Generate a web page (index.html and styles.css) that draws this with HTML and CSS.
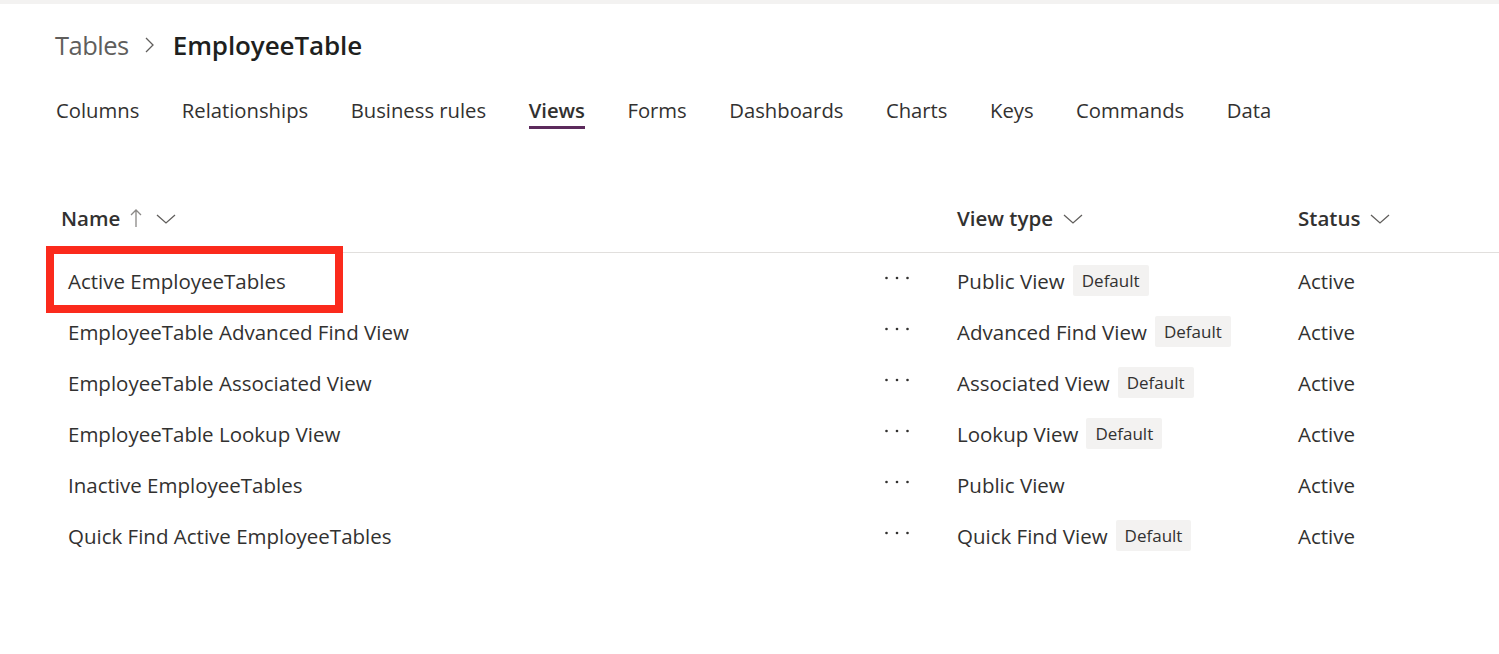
FILE: index.html
```html
<!DOCTYPE html>
<html>
<head>
<meta charset="utf-8">
<link rel="stylesheet" href="styles.css">
</head>
<body>
<div class="topstrip"></div>
<div class="page">
  <div class="breadcrumb">
    <span class="crumb">Tables</span>
    <svg class="crumb-sep" width="12" height="16" viewBox="0 0 12 16"><path d="M2 1 L9 8 L2 15" fill="none" stroke="#605e5c" stroke-width="1.3"/></svg>
    <span class="crumb-current">EmployeeTable</span>
  </div>
  <nav class="tabs">
    <span class="tab">Columns</span>
    <span class="tab">Relationships</span>
    <span class="tab">Business rules</span>
    <span class="tab active">Views</span>
    <span class="tab">Forms</span>
    <span class="tab">Dashboards</span>
    <span class="tab">Charts</span>
    <span class="tab">Keys</span>
    <span class="tab">Commands</span>
    <span class="tab">Data</span>
  </nav>
</div>

<div class="table">
  <div class="row head">
    <div class="c-name h-name">Name
      <svg class="sort" width="12" height="20" viewBox="0 0 12 20"><path d="M6 2 V19 M1 7 L6 2 L11 7" fill="none" stroke="#8a8886" stroke-width="1.3"/></svg>
      <svg class="chev" width="20" height="12" viewBox="0 0 20 12"><path d="M1 2 L10 10 L19 2" fill="none" stroke="#605e5c" stroke-width="1.3"/></svg>
    </div>
    <div class="c-dots"></div>
    <div class="c-type">View type
      <svg class="chev" width="20" height="12" viewBox="0 0 20 12"><path d="M1 2 L10 10 L19 2" fill="none" stroke="#605e5c" stroke-width="1.3"/></svg>
    </div>
    <div class="c-status">Status
      <svg class="chev" width="20" height="12" viewBox="0 0 20 12"><path d="M1 2 L10 10 L19 2" fill="none" stroke="#605e5c" stroke-width="1.3"/></svg>
    </div>
  </div>

  <div class="row first">
    <div class="c-name b-name">Active EmployeeTables<span class="highlight"></span></div>
    <div class="c-dots"><svg width="26" height="6" viewBox="0 0 26 6"><circle cx="2.5" cy="3" r="1.3" fill="#323130"/><circle cx="13" cy="3" r="1.3" fill="#323130"/><circle cx="23.5" cy="3" r="1.3" fill="#323130"/></svg></div>
    <div class="c-type">Public View<span class="badge">Default</span></div>
    <div class="c-status">Active</div>
  </div>
  <div class="row">
    <div class="c-name b-name">EmployeeTable Advanced Find View</div>
    <div class="c-dots"><svg width="26" height="6" viewBox="0 0 26 6"><circle cx="2.5" cy="3" r="1.3" fill="#323130"/><circle cx="13" cy="3" r="1.3" fill="#323130"/><circle cx="23.5" cy="3" r="1.3" fill="#323130"/></svg></div>
    <div class="c-type">Advanced Find View<span class="badge">Default</span></div>
    <div class="c-status">Active</div>
  </div>
  <div class="row">
    <div class="c-name b-name">EmployeeTable Associated View</div>
    <div class="c-dots"><svg width="26" height="6" viewBox="0 0 26 6"><circle cx="2.5" cy="3" r="1.3" fill="#323130"/><circle cx="13" cy="3" r="1.3" fill="#323130"/><circle cx="23.5" cy="3" r="1.3" fill="#323130"/></svg></div>
    <div class="c-type">Associated View<span class="badge">Default</span></div>
    <div class="c-status">Active</div>
  </div>
  <div class="row">
    <div class="c-name b-name">EmployeeTable Lookup View</div>
    <div class="c-dots"><svg width="26" height="6" viewBox="0 0 26 6"><circle cx="2.5" cy="3" r="1.3" fill="#323130"/><circle cx="13" cy="3" r="1.3" fill="#323130"/><circle cx="23.5" cy="3" r="1.3" fill="#323130"/></svg></div>
    <div class="c-type">Lookup View<span class="badge">Default</span></div>
    <div class="c-status">Active</div>
  </div>
  <div class="row">
    <div class="c-name b-name">Inactive EmployeeTables</div>
    <div class="c-dots"><svg width="26" height="6" viewBox="0 0 26 6"><circle cx="2.5" cy="3" r="1.3" fill="#323130"/><circle cx="13" cy="3" r="1.3" fill="#323130"/><circle cx="23.5" cy="3" r="1.3" fill="#323130"/></svg></div>
    <div class="c-type">Public View</div>
    <div class="c-status">Active</div>
  </div>
  <div class="row">
    <div class="c-name b-name">Quick Find Active EmployeeTables</div>
    <div class="c-dots"><svg width="26" height="6" viewBox="0 0 26 6"><circle cx="2.5" cy="3" r="1.3" fill="#323130"/><circle cx="13" cy="3" r="1.3" fill="#323130"/><circle cx="23.5" cy="3" r="1.3" fill="#323130"/></svg></div>
    <div class="c-type">Quick Find View<span class="badge">Default</span></div>
    <div class="c-status">Active</div>
  </div>
</div>
</body>
</html>
```

FILE: styles.css
```css
* { box-sizing: border-box; }
html, body {
  margin: 0;
  padding: 0;
  background: #ffffff;
  font-family: "Open Sans", "Noto Sans", sans-serif;
  color: #323130;
  overflow: hidden;
}
.topstrip {
  height: 4px;
  background: #f3f2f1;
}
.page {
  padding-left: 55px;
}
.breadcrumb {
  display: flex;
  align-items: center;
  height: 40px;
  margin-top: 21px;
}
.crumb {
  font-size: 25.5px;
  color: #605e5c;
  letter-spacing: -0.5px;
}
.crumb-sep {
  margin: 0 17px 0 15px;
}
.crumb-current {
  font-size: 26px;
  font-weight: 600;
  color: #201f1e;
  letter-spacing: -0.1px;
}
.tabs {
  display: flex;
  gap: 42.5px;
  margin-top: 31px;
  padding-left: 1px;
}
.tab {
  font-size: 20.25px;
  line-height: 28px;
  padding-bottom: 2px;
  border-bottom: 3px solid transparent;
  color: #323130;
}
.tab.active {
  font-weight: 600;
  border-bottom-color: #5c2a5c;
}
.table {
  margin-top: 54px;
  margin-left: 46px;
}
.row {
  display: grid;
  grid-template-columns: 830px 69px 341px 1fr;
  align-items: center;
  height: 51px;
  font-size: 20.5px;
  position: relative;
}
.row.head {
  height: 70px;
  font-weight: 600;
  border-bottom: 1px solid #e1dfdd;
  color: #323130;
  margin-bottom: 2px;
}
.row.head > div {
  display: flex;
  align-items: center;
}
.h-name { padding-left: 15px; }
.b-name { padding-left: 22px; }
.c-dots { padding-left: 8px; display: flex; align-items: center; padding-bottom: 6px; }
.c-type { padding-left: 12px; display: flex; align-items: center; }
.c-status { padding-left: 12px; }
.sort { margin-left: 10px; }
.chev { margin-left: 10px; margin-top: 2px; }
.h-name .chev { margin-left: 14px; }
.badge {
  display: inline-block;
  margin-left: 8px;
  background: #f3f2f1;
  font-size: 17px;
  line-height: 31px;
  height: 31px;
  padding: 0 9px;
  border-radius: 2px;
  color: #323130;
}
.highlight {
  position: absolute;
  left: 0;
  top: -9px;
  width: 297px;
  height: 67px;
  border: 8px solid #fb2a1c;
  pointer-events: none;
}
```
